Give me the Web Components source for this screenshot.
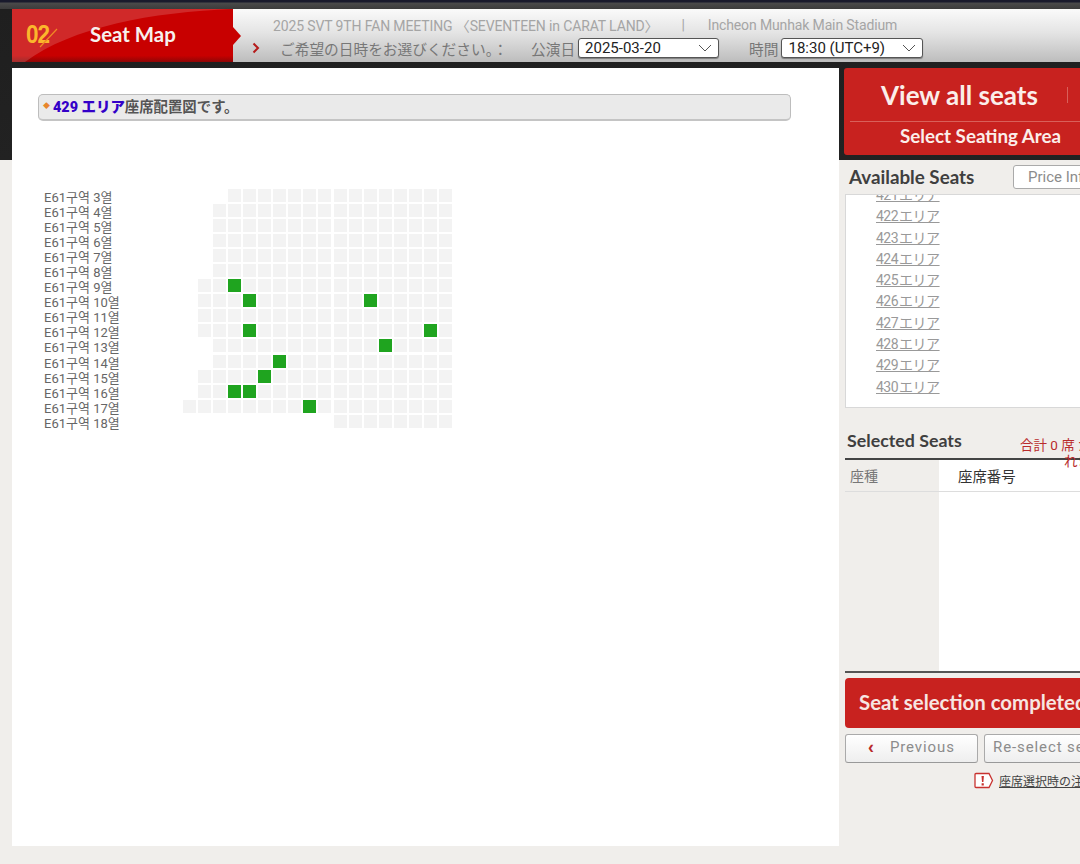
<!DOCTYPE html>
<html lang="ja"><head><meta charset="utf-8"><title>Seat Map</title>
<style>html,body{margin:0;padding:0;height:864px;overflow:hidden;background:#f0eeeb}</style>
</head><body>
<seat-app></seat-app>
<script>
const CJK='Roboto,"Noto Sans CJK JP",sans-serif';
const KR='Roboto,"Noto Sans CJK KR",sans-serif';
const HEAD='Lato,"Noto Sans",sans-serif';
function def(name,html,build){
  customElements.define(name,class extends HTMLElement{
    constructor(){super();const r=this.attachShadow({mode:'open'});r.innerHTML=html;}
    connectedCallback(){ if(build&&!this._b){this._b=1;build(this.shadowRoot,this);} }
  });
}
def('drop-select',`<style>
:host{display:inline-flex;align-items:center;justify-content:space-between;box-sizing:border-box;height:20px;border:1px solid #555;border-radius:3px;background:#fff;padding:0 6px 0 6px;font:15px ${CJK};color:#222;box-shadow:0 1px 1px rgba(0,0,0,.35)}
svg{width:14px;height:8px;fill:none;stroke:#555;stroke-width:1}
</style><slot></slot><svg viewBox="0 0 14 8"><path d="M1 1l6 6 6-6"/></svg>`);

def('step-header',`<style>
:host{display:flex;height:53px;background:linear-gradient(#fafafa 0,#e4e4e4 45%,#bdbdbd 100%);font:14px ${CJK};color:#a5a5a5}
.step{position:relative;flex:0 0 221px;background:linear-gradient(#c80000 0,#c80000 88%,#8f0606 100%);display:flex;align-items:center;box-sizing:border-box;padding:0 0 2px 14px}
.step svg.sw{position:absolute;inset:0;width:221px;height:53px}
.step::after{content:"";position:absolute;left:100%;top:18px;border-left:8px solid #c80000;border-top:9px solid transparent;border-bottom:9px solid transparent}
.num{position:relative;font:700 25px/1 "Liberation Sans",sans-serif;color:#fbb62c;letter-spacing:-1px;width:64px;transform:scaleX(.9);transform-origin:left}
.slash{position:absolute;left:26px;top:18px;width:22px;height:22px}
.title{position:relative;font:700 20.4px/1 ${HEAD};color:#f7f1ee}
.info{flex:1;display:flex;flex-direction:column;padding:6px 0 0 20px;min-width:0}
.l1,.l2{display:flex;align-items:center;white-space:nowrap;flex:none}
.l1{height:20px;padding-left:20px;letter-spacing:-.13px}.l1 .sep{margin:0 23px 0 23px}
.l2{height:24px;margin-top:1px;color:#777;margin-left:-1px;font-size:14.7px}
.ch{width:28px;height:12px;flex:none}.ch svg{display:block;width:8px;height:12px;fill:none;stroke:#b51b1b;stroke-width:2}
.q{width:251px}.lab{margin-right:3px}
.t{margin:0 3px 0 30px}
</style>
<div class="step"><svg class="sw" viewBox="0 0 221 53" preserveAspectRatio="none"><path d="M0 0H221C140 3 60 18 13 53H0Z" fill="#fff" opacity=".16"/></svg>
<span class="num">02</span><svg class="slash" viewBox="0 0 22 22"><path d="M2 20L19 2" stroke="#f08a24" stroke-width="1.2"/></svg><span class="title">Seat Map</span></div>
<div class="info">
<div class="l1"><span>2025 SVT 9TH FAN MEETING 〈SEVENTEEN in CARAT LAND〉</span><span class="sep">|</span><span>Incheon Munhak Main Stadium</span></div>
<div class="l2"><span class="ch"><svg viewBox="0 0 8 12"><path d="M1.5 1.5L6 6l-4.5 4.5"/></svg></span><span class="q">ご希望の日時をお選びください。：</span><span class="lab">公演日</span><drop-select style="width:141px">2025-03-20</drop-select><span class="t">時間</span><drop-select style="width:142px">18:30 (UTC+9)</drop-select></div>
</div>`);

def('notice-bar',`<style>
:host{display:flex;align-items:center;box-sizing:border-box;height:27px;border:1px solid #bdbdbd;border-bottom:2px solid #c4c4c4;border-radius:5px;background:#eaeaea;padding:0 0 4px 4px;font:700 14.4px ${CJK};color:#555;gap:3px}
i{font-style:normal;font-size:7px;color:#e8862c}b{color:#3300c8}
</style><i>◆</i><span><b>429 エリア</b>座席配置図です。</span>`);

const ROWS=[[3,3,[]],[4,2,[]],[5,2,[]],[6,2,[]],[7,2,[]],[8,2,[]],[9,1,[3]],[10,1,[4,12]],[11,1,[]],[12,1,[4,16]],[13,2,[13]],[14,2,[6]],[15,1,[5]],[16,1,[3,4]],[17,0,[8]],[18,10,[]]];
def('seat-map',`<style>
:host{display:block;font:13px ${KR};color:#666}
.row{display:grid;grid-template-columns:137px repeat(18,13px);column-gap:2.06px;height:13px;margin-bottom:2.06px}
.lab{height:13px;line-height:17px;white-space:nowrap}
.c{height:13px;background:#f3f3f3}.g{background:#1fa41f}
</style><div id="m"></div>`,(r)=>{
  r.getElementById('m').innerHTML=ROWS.map(([n,s,g])=>{
    let h=`<div class="row"><div class="lab">E61구역 ${n}열</div>`;
    for(let i=0;i<18;i++) h+= i<s?'<div></div>':`<div class="c${g.includes(i)?' g':''}"></div>`;
    return h+'</div>';
  }).join('');
});

def('main-panel',`<style>
:host{display:block;box-sizing:border-box;flex:0 0 827px;height:778px;background:#fff;padding:26px 0 0 26px}
notice-bar{width:753px}
seat-map{margin:68px 0 0 6px}
</style><notice-bar></notice-bar><seat-map></seat-map>`);

def('area-list',`<style>
:host{display:block;box-sizing:border-box;height:214px;border:1px solid #d8d8d8;background:#fff;overflow:hidden;font:14px ${CJK};color:#999}
.s{margin-top:-10px;padding-left:30px}
a{display:block;height:21.3px;line-height:21.3px;text-decoration:underline;color:#999;letter-spacing:-.5px;word-spacing:-2px}
</style><div class="s"><a>421 エリア</a><a>422 エリア</a><a>423 エリア</a><a>424 エリア</a><a>425 エリア</a><a>426 エリア</a><a>427 エリア</a><a>428 エリア</a><a>429 エリア</a><a>430 エリア</a></div>`);

def('plain-btn',`<style>
:host{display:flex;align-items:center;box-sizing:border-box;height:29px;border:1px solid #aaa;border-bottom-color:#999;border-radius:3px;background:linear-gradient(#fff,#eee);font:15px ${CJK};color:#8c8c8c;letter-spacing:.9px;white-space:nowrap;gap:15px;padding:0 0 3px 8px}
</style><slot></slot>`);

def('side-panel',`<style>
:host{display:block;flex:0 0 241px;width:241px;height:796px;overflow:hidden}
.in{width:440px;box-sizing:border-box;padding-left:5px}
.red{box-sizing:border-box;height:87px;width:330px;background:#c8221f;border-radius:3px;color:#fbeeea;font-family:${HEAD};font-weight:700}
.r1{height:53px;display:flex;align-items:center;font-size:26px;padding-left:37px;gap:29px}
.r1 i{display:block;width:1px;height:16px;background:#d9605a}
.r2{border-top:1px solid #d9605a;margin-left:6px;height:33px;line-height:28px;font-size:18.8px;padding-left:50px}
.avail{margin-top:5px;padding-top:5px;display:flex;align-items:flex-start;height:29px}
h3{margin:0;font:700 17.8px/1 ${HEAD};color:#3f3f3f}
.avail h3{margin:3px 0 0 5px;width:164px;font-size:18.8px}
.price{display:block;width:120px;height:24px;box-sizing:border-box;border:1px solid #aaa;border-radius:3px;background:#fff;font:15px/22px ${CJK};color:#8c8c8c;padding-left:14px;white-space:nowrap}
area-list{margin-left:1px;width:400px}
.sel{position:relative;margin-top:24px;height:26px;margin-left:1px}
.sel h3{padding:0 0 0 2px;line-height:16px}
.sum{position:absolute;left:175px;top:5px;white-space:nowrap;font:13.5px/16px ${CJK};color:#b92b2b}
.sum span{margin-left:44px}
.tbl{margin-left:1px;border-top:2px solid #444;border-bottom:2px solid #555;display:grid;grid-template-columns:94px 1fr;height:211px;grid-template-rows:32px 1fr}
.th1,.th2{font:14px/32px ${CJK};border-bottom:1px solid #ddd}
.th1{color:#777;padding-left:5px}
.th2{background:#fff;color:#333;padding-left:19px;font-size:14.4px;line-height:35px}
.b2{background:#fff}
.done{margin:5px 0 0 1px;height:50px;border-radius:4px;background:#c8221f;color:#f7e6e2;font:700 20.4px/48px ${HEAD};padding-left:14px;white-space:nowrap}
.btns{display:flex;gap:6px;margin:6px 0 0 1px}
.ch{color:#b92b2b;font:700 18px/1 "Liberation Sans",sans-serif;margin-left:14px}
.note{display:flex;align-items:center;margin:9px 0 0 130px;font:12px ${CJK};color:#444;white-space:nowrap;gap:5px}
.note span{text-decoration:underline}
.note svg{width:20px;height:17px;flex:none}
</style>
<div class="in">
<div class="red"><div class="r1"><span>View all seats</span><i></i></div><div class="r2">Select Seating Area</div></div>
<div class="avail"><h3>Available Seats</h3><span class="price">Price Information</span></div>
<area-list></area-list>
<div class="sel"><h3>Selected Seats</h3><div class="sum">合計 0 席 が選択さ<br><span>れました</span></div></div>
<div class="tbl"><div class="th1">座種</div><div class="th2">座席番号</div><div class="b1"></div><div class="b2"></div></div>
<div class="done">Seat selection completed</div>
<div class="btns"><plain-btn style="width:133px"><span class="ch">&#8249;</span>Previous</plain-btn><plain-btn style="width:180px">Re-select seats</plain-btn></div>
<div class="note"><svg viewBox="0 0 20 17"><path d="M2 1.5h13l3.5 7-3.5 7H2a1 1 0 0 1-1-1v-12a1 1 0 0 1 1-1z" fill="#fff" stroke="#c8322f" stroke-width="1.3"/><path d="M7.5 4h2.4L9.4 10H8zM7.6 11.2h2.2v2.2H7.6z" fill="#c8322f"/></svg><span>座席選択時の注意事項</span></div>
</div>`);

def('seat-app',`<style>
:host{display:block;width:1080px;height:864px;overflow:hidden;box-sizing:border-box;padding:9px 0 0 12px;
background:linear-gradient(#191a2c 0,#191a2c 2px,#4a4a4a 3px,#3c3c3c 9px,#1f1f1f 9px,#222 160px,#f0eeeb 160px)}
step-header{margin-right:-12px}
.row{display:flex;margin-top:6px}
</style><step-header></step-header><div class="row"><main-panel></main-panel><side-panel></side-panel></div>`);
</script>
</body></html>
